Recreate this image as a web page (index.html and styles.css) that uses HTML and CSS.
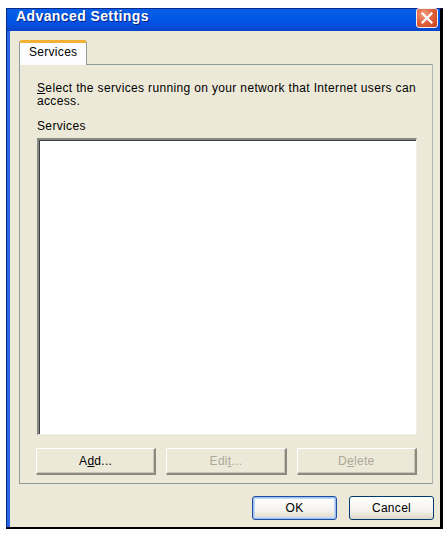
FILE: index.html
```html
<!DOCTYPE html>
<html>
<head>
<meta charset="utf-8">
<link rel="stylesheet" href="styles.css">
</head>
<body>
<div class="window">
  <div class="titlebar">
    <span class="title">Advanced Settings</span>
    <span class="close"><svg width="22" height="20" viewBox="0 0 22 20"><path d="M6.5 5.5 L15.5 14.5 M15.5 5.5 L6.5 14.5" stroke="#fff" stroke-width="2.2" stroke-linecap="square"/></svg></span>
  </div>
  <div class="client">
    <div class="tabs">
      <div class="tab">Services</div>
    </div>
    <div class="panel">
      <p class="desc"><span class="ak">S</span>elect the services running on your network that Internet users can access.</p>
      <div class="label">Services</div>
      <div class="listbox"></div>
      <div class="btnrow">
        <div class="btn">A<span class="ak">d</span>d...</div>
        <div class="btn disabled">Edi<span class="ak">t</span>...</div>
        <div class="btn disabled">D<span class="ak">e</span>lete</div>
      </div>
    </div>
    <div class="footer">
      <div class="xpbtn default">OK</div>
      <div class="xpbtn">Cancel</div>
    </div>
  </div>
</div>
</body>
</html>
```
FILE: styles.css
```css
html, body { margin: 0; padding: 0; background: #fff; }
body { font-family: "Liberation Sans", Arial, sans-serif; font-size: 12px; color: #000; }

.ak { text-decoration: underline; }

.window {
  margin: 8px 0 0 6px;
  width: 437px;
  height: 521px;
  box-sizing: border-box;
  border-left: 1px solid #0a2a8a;
  border-top: 1px solid #0a2a8a;
  border-right: 3px solid #000;
  border-bottom: 2px solid #000;
  background: #ECE9D8;
  display: flex;
  flex-direction: column;
}

.titlebar {
  height: 22px;
  background: linear-gradient(#0a5fe8, #0058e6 40%, #0550e0 70%, #0645c8);
  display: flex;
  align-items: flex-start;
  position: relative;
}
.title {
  color: #fff;
  font-weight: bold;
  font-size: 14px;
  line-height: 14px;
  margin: 0 0 0 9px;
  letter-spacing: 0.4px;
  text-shadow: 1px 1px 0 #0a1e80;
}
.close {
  position: absolute;
  right: 2px;
  top: -1px;
  width: 22px;
  height: 20px;
  box-sizing: border-box;
  border: 1px solid #f4f0f0;
  border-radius: 3px;
  background: radial-gradient(circle at 35% 30%, #f0a080, #e0603a 50%, #c8401c);
  display: flex;
}
.close svg { display: block; margin: -1px; }

.client {
  flex: 1;
  border-left: 3px solid #2766e4;
  display: flex;
  flex-direction: column;
  padding: 9px 0 0 9px;
}

.tabs { display: flex; height: 24px; }
.tab {
  width: 68px;
  box-sizing: border-box;
  border: 1px solid #919b9c;
  border-bottom: none;
  border-top: 3px solid #f2b035;
  border-radius: 3px 3px 0 0;
  background: #fcfcfe;
  padding: 2px 0 0 9px;
  font-size: 12px;
  letter-spacing: 0.3px;
  line-height: 15px;
  position: relative;
  margin-bottom: -1px;
  z-index: 1;
}

.panel {
  width: 414px;
  height: 420px;
  box-sizing: border-box;
  border: 1px solid #919b9c;
  border-right-color: #b0b6b6;
  background: #ECE9D8;
  padding: 17px 15px 0 17px;
  display: flex;
  flex-direction: column;
}
.desc {
  margin: 0;
  font-size: 12px;
  letter-spacing: 0.35px;
  line-height: 13px;
  width: 388px;
}
.label {
  margin-top: 12px;
  font-size: 12px;
  letter-spacing: 0.35px;
  line-height: 13px;
}
.listbox {
  margin-top: 5px;
  width: 380px;
  height: 297px;
  box-sizing: border-box;
  background: #fff;
  border-top: 2px solid #8a8a85;
  border-left: 2px solid #8a8a85;
  border-right: 1px solid #f0efe8;
  border-bottom: 1px solid #f0efe8;
  box-shadow: inset 1px 1px 0 #404040;
}

.btnrow {
  margin-top: 13px;
  display: flex;
  gap: 10px;
  margin-left: -1px;
}
.btn {
  width: 121px;
  height: 27px;
  box-sizing: border-box;
  background: #ECE9D8;
  border-top: 1px solid #fff;
  border-left: 1px solid #fff;
  border-right: 2px solid #8c8a80;
  border-bottom: 2px solid #8c8a80;
  box-shadow: inset -1px -1px 0 #c8c5b6;
  font-size: 12px;
  letter-spacing: 0.3px;
  display: flex;
  align-items: center;
  justify-content: center;
}
.btn.disabled { color: #aca899; }

.footer {
  display: flex;
  justify-content: flex-end;
  gap: 12px;
  padding: 12px 6px 0 0;
}
.xpbtn {
  width: 85px;
  height: 24px;
  box-sizing: border-box;
  border: 1px solid #003c74;
  border-radius: 3px;
  background: linear-gradient(#ffffff, #f4f3ee 60%, #dcd8c8);
  font-size: 12px;
  letter-spacing: 0.3px;
  display: flex;
  align-items: center;
  justify-content: center;
}
.xpbtn.default {
  box-shadow: inset 0 0 0 1px #9dbef0, inset 0 0 0 2px #c4d8f8;
  border-color: #1c4fa0;
}
```
